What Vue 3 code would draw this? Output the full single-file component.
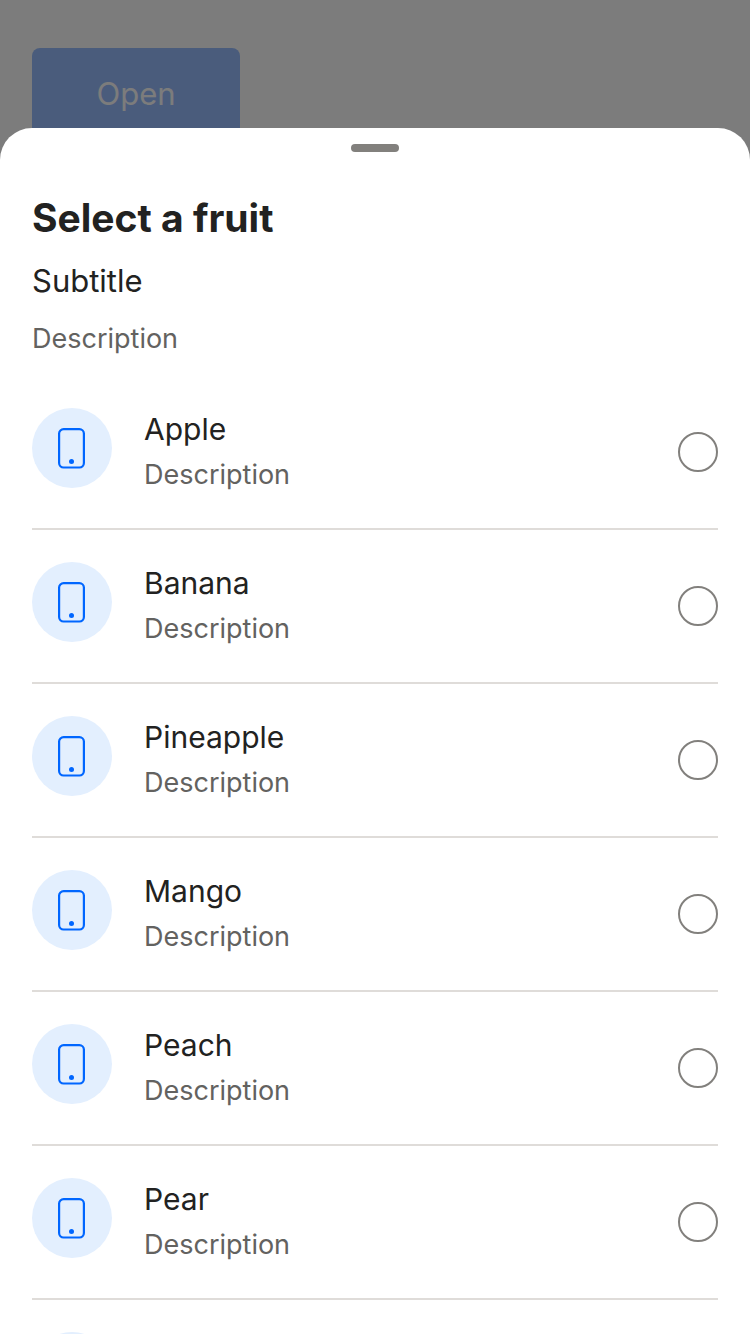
<script setup>
import { ref } from 'vue'

const fruits = ['Apple', 'Banana', 'Pineapple', 'Mango', 'Peach', 'Pear']
const selected = ref('')
</script>

<template>
  <div class="page">
    <main class="content">
      <button class="open" type="button">Open</button>
    </main>
    <div class="backdrop"></div>
    <section class="sheet" role="dialog" aria-labelledby="sheet-title">
      <div class="handle"></div>
      <header class="header">
        <h1 id="sheet-title" class="title">Select a fruit</h1>
        <p class="subtitle">Subtitle</p>
        <p class="description">Description</p>
      </header>
      <ul class="list">
        <li v-for="fruit in fruits" :key="fruit" class="item">
          <label class="row" :for="'fruit-' + fruit">
            <span class="asset">
              <svg width="28" height="42" viewBox="0 0 28 42" fill="none" aria-hidden="true">
                <rect x="1.1" y="2.1" width="24.8" height="38.4" rx="4.5" stroke="#0066ff" stroke-width="2.2" />
                <circle cx="13.5" cy="34.5" r="2.5" fill="#0066ff" />
              </svg>
            </span>
            <span class="texts">
              <span class="name">{{ fruit }}</span>
              <span class="detail">Description</span>
            </span>
            <input :id="'fruit-' + fruit" v-model="selected" class="radio" type="radio" name="fruit" :value="fruit" />
          </label>
        </li>
        <li class="row" aria-hidden="true">
          <span class="asset"></span>
        </li>
      </ul>
    </section>
  </div>
</template>

<style>
body {
  margin: 0;
  overflow: hidden;
}
</style>

<style scoped>
.page {
  position: relative;
  height: 100vh;
  overflow: hidden;
  background: #f9f9f9;
  color: #222221;
  font-family: Inter, "Liberation Sans", sans-serif;
}
.content {
  padding: 48px 32px;
}
.open {
  display: block;
  width: 208px;
  height: 96px;
  padding: 0 0 6px;
  border: 0;
  border-radius: 8px;
  background: #94b8f8;
  color: #f9f9f9;
  font: inherit;
  font-size: 31px;
}
.backdrop {
  position: absolute;
  inset: 0;
  background: rgba(0, 0, 0, 0.5);
}
.sheet {
  position: absolute;
  inset: 128px 0 0;
  box-sizing: border-box;
  padding: 16px 32px 0;
  overflow: hidden;
  border-radius: 32px 32px 0 0;
  background: #fff;
}
.handle {
  width: 48px;
  height: 8px;
  margin: 0 auto;
  border-radius: 4px;
  background: #82807d;
}
.header {
  padding: 40px 0 16px;
}
.title,
.subtitle,
.description {
  margin: 0;
}
.title {
  font-size: 39px;
  font-weight: 700;
  line-height: 52px;
}
.subtitle {
  margin-top: 16px;
  font-size: 31px;
  line-height: 42px;
}
.description {
  margin-top: 16px;
  color: #636260;
  font-size: 27px;
  line-height: 42px;
}
.list {
  margin: 0;
  padding: 0;
  list-style: none;
}
.item {
  border-bottom: 2px solid #dfdcd9;
}
.row {
  display: flex;
  align-items: center;
  gap: 32px;
  padding: 32px 0;
}
.asset {
  display: flex;
  flex: none;
  align-items: center;
  justify-content: center;
  align-self: flex-start;
  width: 80px;
  height: 80px;
  border-radius: 50%;
  background: #e3effe;
}
.texts {
  display: flex;
  flex: 1;
  flex-direction: column;
  gap: 4px;
}
.name {
  font-size: 30px;
  line-height: 42px;
}
.detail {
  color: #636260;
  font-size: 27px;
  line-height: 42px;
}
.radio {
  appearance: none;
  flex: none;
  box-sizing: border-box;
  width: 40px;
  height: 40px;
  margin: 0;
  border: 2px solid #82807d;
  border-radius: 50%;
  background: #fff;
}
.radio:checked {
  border: 12px solid #0066ff;
}
</style>
